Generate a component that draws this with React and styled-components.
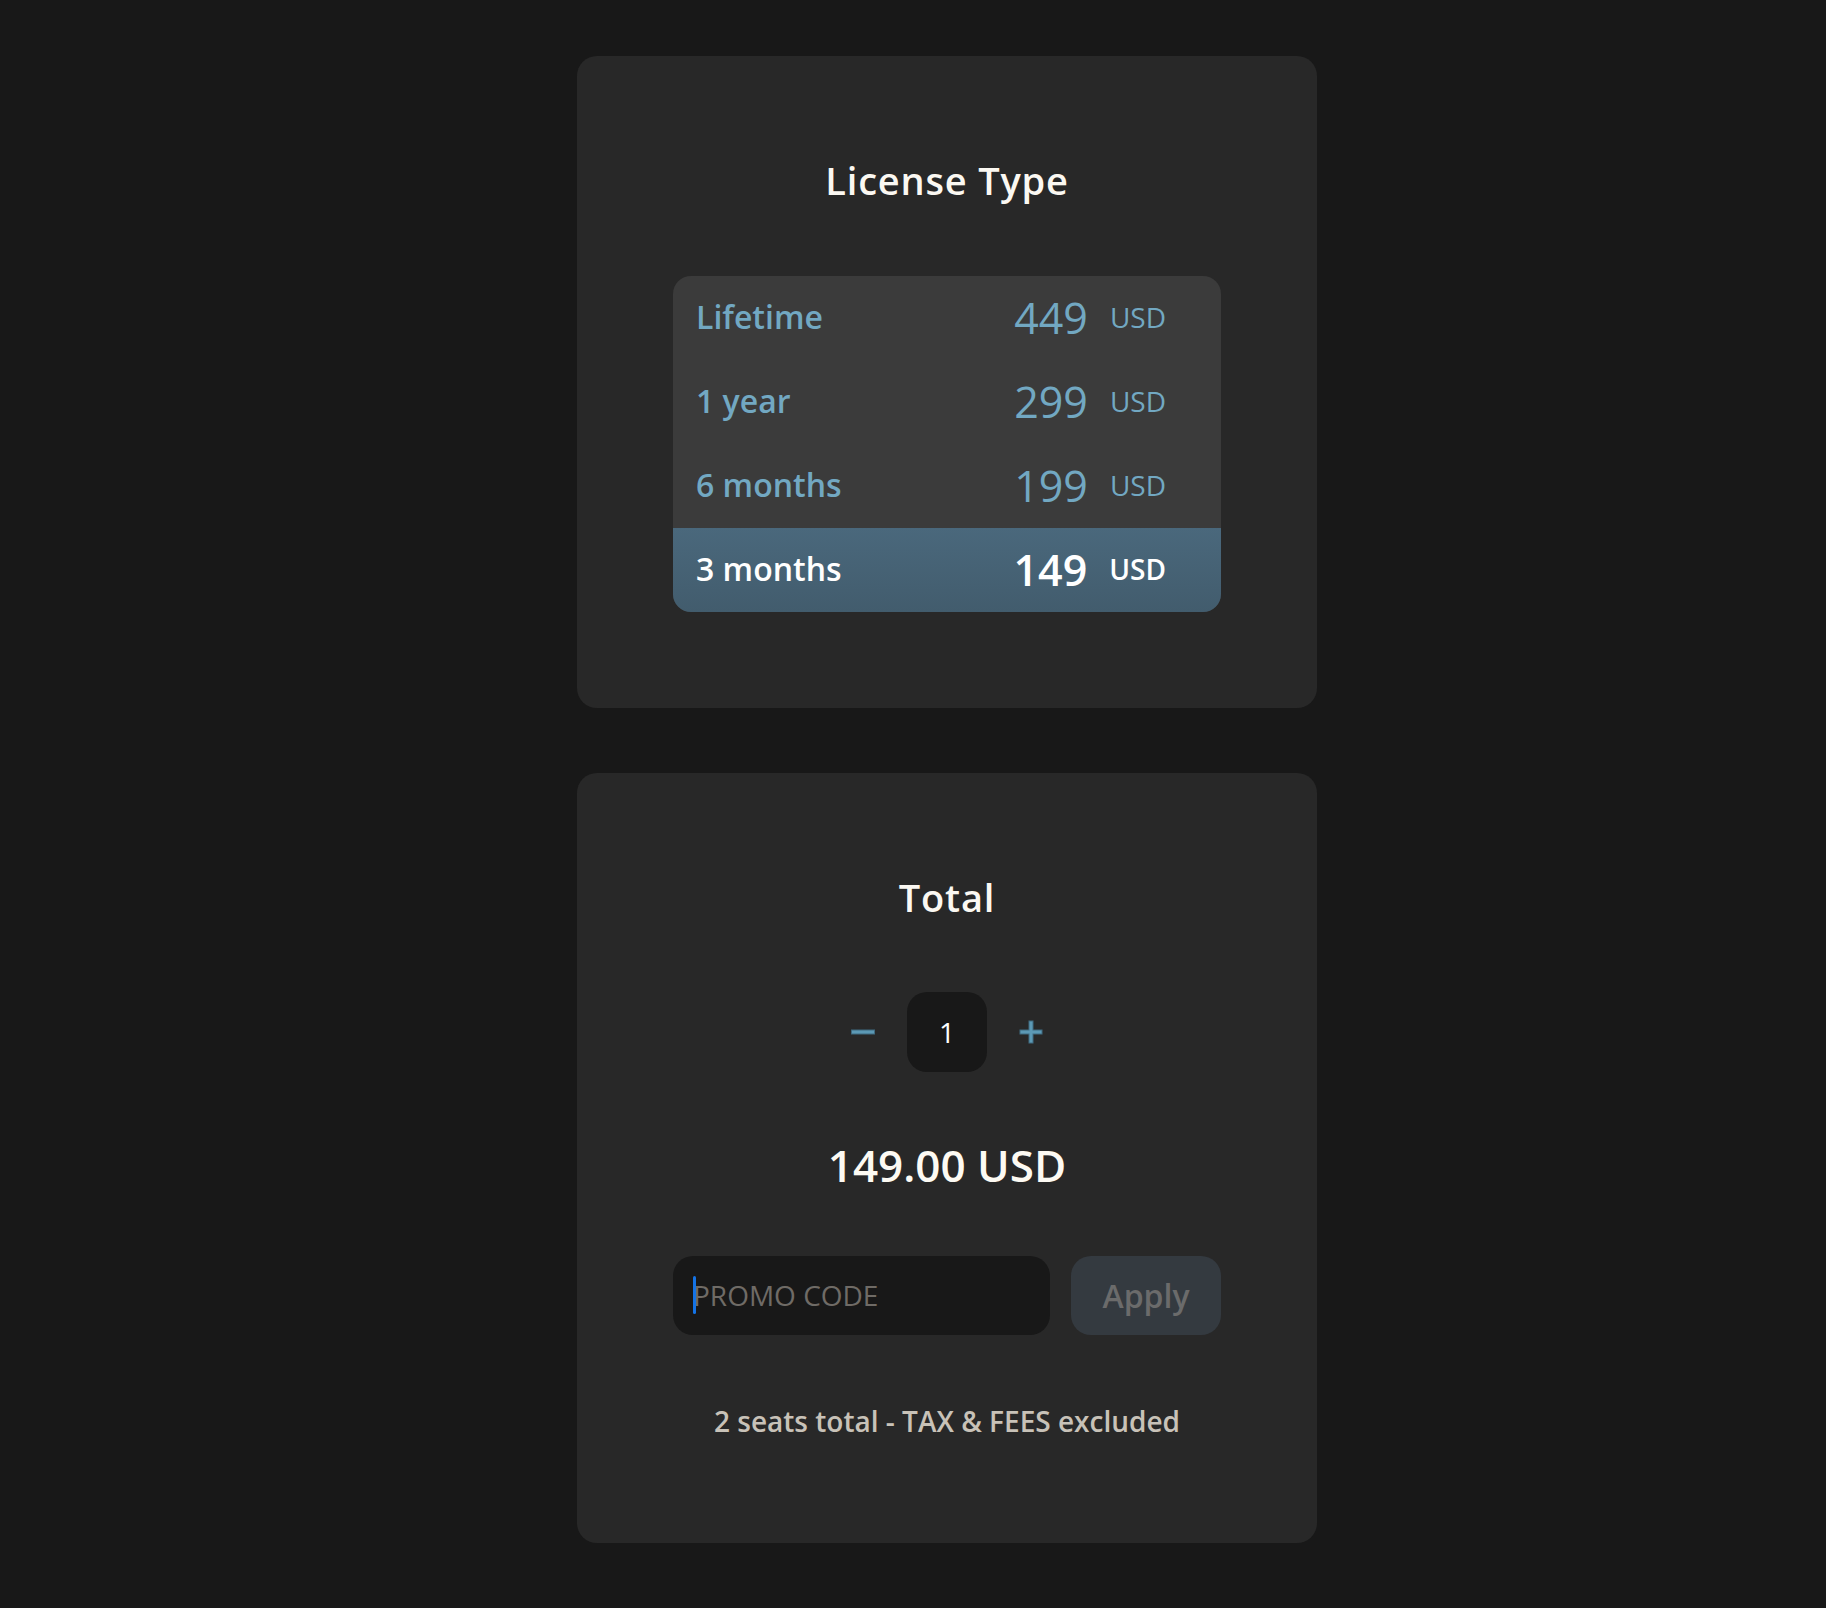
import React, { useState } from 'react';
import styled, { createGlobalStyle } from 'styled-components';

const GlobalStyle = createGlobalStyle`
  html, body {
    margin: 0;
    background: #181818;
  }
  body {
    font-family: "Open Sans", "Noto Sans", sans-serif;
    color: #fbf8f2;
  }
  * {
    box-sizing: border-box;
  }
`;

const plans = [
  { label: 'Lifetime', price: 449 },
  { label: '1 year', price: 299 },
  { label: '6 months', price: 199 },
  { label: '3 months', price: 149 },
];

const Page = styled.div`
  min-height: 100vh;
  display: flex;
  flex-direction: column;
  align-items: center;
  gap: 65px;
  padding: 56px 0 64px 68px;
`;

const Card = styled.section`
  width: 740px;
  display: flex;
  flex-direction: column;
  padding: 102px 96px ${(p) => p.$bottom || 96}px;
  background: #282828;
  border-radius: 20px;
`;

const Title = styled.h2`
  margin: 0 0 72px;
  text-align: center;
  font-size: 38px;
  line-height: 1.2;
  font-weight: 600;
  letter-spacing: 0.8px;
  color: #fbf8f2;
`;

const PriceTable = styled.div`
  background: #3b3b3b;
  border-radius: 18px;
  overflow: hidden;
`;

const Row = styled.div`
  height: 84px;
  display: flex;
  align-items: center;
  padding: 0 55px 0 23px;
  cursor: pointer;
  color: ${(p) => (p.$active ? '#ffffff' : '#72a8c2')};
  background: ${(p) =>
    p.$active ? 'linear-gradient(180deg, #4a687c 0%, #425c6d 100%)' : 'transparent'};
`;

const Label = styled.span`
  flex: 1;
  font-size: 32px;
  font-weight: 600;
  line-height: 1.2;
`;

const Price = styled.span`
  font-size: 43px;
  font-weight: ${(p) => (p.$active ? 600 : 400)};
  line-height: 1.2;
`;

const Currency = styled.span`
  margin-left: 22px;
  font-size: 28px;
  font-weight: ${(p) => (p.$active ? 600 : 400)};
  line-height: 1.2;
`;

const Stepper = styled.div`
  display: flex;
  align-items: center;
  justify-content: center;
  gap: 24px;
`;

const StepButton = styled.button`
  width: 40px;
  height: 40px;
  padding: 0;
  border: none;
  background: none;
  display: flex;
  align-items: center;
  justify-content: center;
  cursor: pointer;
`;

const QtyBox = styled.div`
  width: 80px;
  height: 80px;
  border-radius: 20px;
  background: #181818;
  display: flex;
  align-items: center;
  justify-content: center;
  font-size: 28px;
  color: #ffffff;
`;

const Amount = styled.div`
  margin-top: 67px;
  text-align: center;
  font-size: 44px;
  font-weight: 600;
  line-height: 1.2;
  color: #fdfaf3;
`;

const PromoRow = styled.div`
  margin-top: 64px;
  display: flex;
  gap: 21px;
  height: 79px;
`;

const InputWrap = styled.div`
  position: relative;
  flex: 1;
`;

const PromoInput = styled.input`
  width: 100%;
  height: 100%;
  border: none;
  outline: none;
  border-radius: 20px;
  background: #181818;
  padding: 0 20px;
  font-family: inherit;
  font-size: 28px;
  color: #e8e4dc;
  caret-color: transparent;
  &::placeholder {
    color: #6f6b66;
  }
`;

const Caret = styled.span`
  position: absolute;
  left: 20px;
  top: 50%;
  width: 3px;
  height: 38px;
  transform: translateY(-50%);
  border-radius: 2px;
  background: #1473e6;
  pointer-events: none;
`;

const ApplyButton = styled.button`
  width: 150px;
  border: none;
  border-radius: 20px;
  background: #343a40;
  color: #6b6b6b;
  font-family: inherit;
  font-size: 32px;
  font-weight: 600;
  cursor: pointer;
`;

const Note = styled.p`
  margin: 70px 0 0;
  text-align: center;
  font-size: 28px;
  font-weight: 600;
  line-height: 1.2;
  color: #c8c2b8;
`;

const MinusIcon = () => (
  <svg width="26" height="26" viewBox="0 0 26 26">
    <line x1="1" y1="13" x2="25" y2="13" stroke="#3f6a80" strokeWidth="5" />
    <line x1="2" y1="13" x2="24" y2="13" stroke="#5c99b5" strokeWidth="3" />
  </svg>
);

const PlusIcon = () => (
  <svg width="26" height="26" viewBox="0 0 26 26">
    <path d="M1.5 13H24.5M13 1.5V24.5" stroke="#3f6a80" strokeWidth="5" />
    <path d="M2.5 13H23.5M13 2.5V23.5" stroke="#5c99b5" strokeWidth="3" />
  </svg>
);

export default function App() {
  const [selected, setSelected] = useState(3);
  const [qty, setQty] = useState(1);
  const [code, setCode] = useState('');

  const total = plans[selected].price * qty;

  return (
    <>
      <GlobalStyle />
      <Page>
        <Card>
          <Title>License Type</Title>
          <PriceTable>
            {plans.map((plan, i) => (
              <Row key={plan.label} $active={i === selected} onClick={() => setSelected(i)}>
                <Label>{plan.label}</Label>
                <Price $active={i === selected}>{plan.price}</Price>
                <Currency $active={i === selected}>USD</Currency>
              </Row>
            ))}
          </PriceTable>
        </Card>

        <Card $bottom={104}>
          <Title>Total</Title>
          <Stepper>
            <StepButton aria-label="decrease" onClick={() => setQty((q) => Math.max(1, q - 1))}>
              <MinusIcon />
            </StepButton>
            <QtyBox>{qty}</QtyBox>
            <StepButton aria-label="increase" onClick={() => setQty((q) => q + 1)}>
              <PlusIcon />
            </StepButton>
          </Stepper>
          <Amount>{total.toFixed(2)} USD</Amount>
          <PromoRow>
            <InputWrap>
              <PromoInput
                placeholder="PROMO CODE"
                value={code}
                onChange={(e) => setCode(e.target.value)}
              />
              {code === '' && <Caret />}
            </InputWrap>
            <ApplyButton>Apply</ApplyButton>
          </PromoRow>
          <Note>{qty + 1} seats total - TAX &amp; FEES excluded</Note>
        </Card>
      </Page>
    </>
  );
}
